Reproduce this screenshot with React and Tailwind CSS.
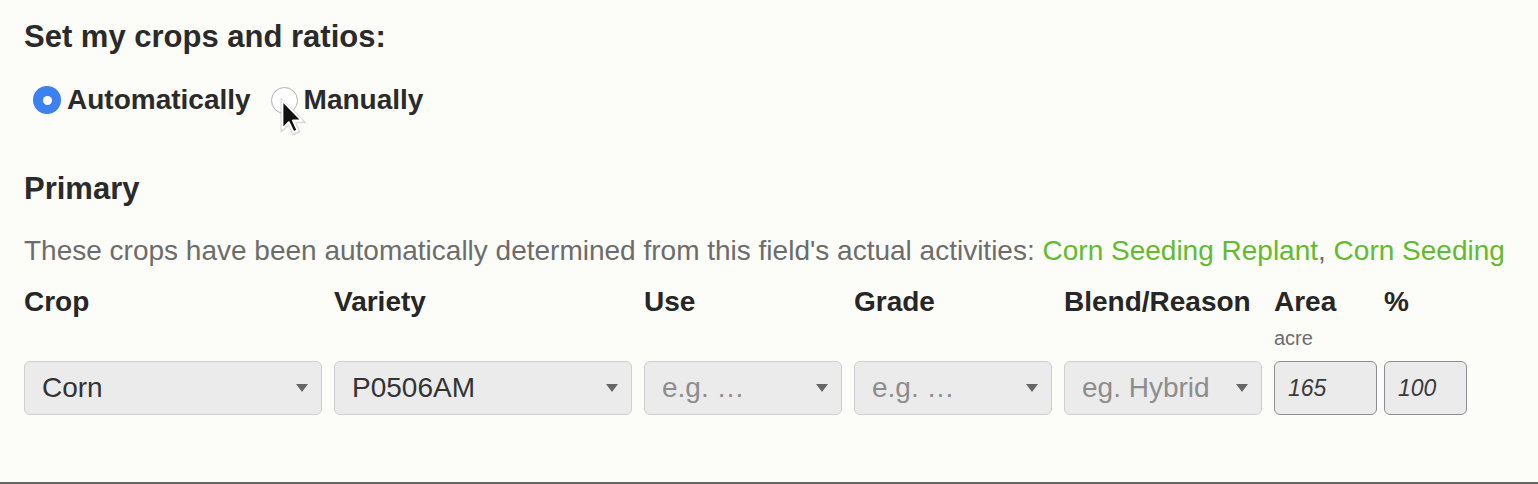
import { useState } from "react";

const columns = [
  { label: "Crop", width: "w-[298px]", type: "select", value: "Corn" },
  { label: "Variety", width: "w-[298px]", type: "select", value: "P0506AM" },
  { label: "Use", width: "w-[198px]", type: "select", placeholder: "e.g. …" },
  { label: "Grade", width: "w-[198px]", type: "select", placeholder: "e.g. …" },
  { label: "Blend/Reason", width: "w-[198px]", type: "select", placeholder: "eg. Hybrid" },
];

function Caret() {
  return (
    <svg width="12" height="8" viewBox="0 0 12 8" className="shrink-0">
      <polygon points="0,0 12,0 6,8" fill="#666666" />
    </svg>
  );
}

function SelectBox({ width, value, placeholder }) {
  return (
    <div
      className={`${width} h-[54px] flex items-center justify-between pl-[17px] pr-[13px] rounded-[6px] border border-[#cfcfd2] bg-[#ebebec]`}
    >
      {value ? (
        <span className="text-[28px] text-[#333333]">{value}</span>
      ) : (
        <span className="text-[28px] text-[#8d8d8d]">{placeholder}</span>
      )}
      <Caret />
    </div>
  );
}

function NumberBox({ width, value }) {
  return (
    <div
      className={`${width} h-[54px] flex items-center pl-[13px] rounded-[6px] border-[1.5px] border-[#8e8e92] bg-[#ebebec]`}
    >
      <span className="text-[23px] italic text-[#3a3a3a]">{value}</span>
    </div>
  );
}

function Radio({ checked, label, onClick }) {
  return (
    <button type="button" onClick={onClick} className="flex items-center gap-[6px] h-[28px]">
      {checked ? (
        <span className="w-[28px] h-[28px] rounded-full bg-[#3d80ef] flex items-center justify-center">
          <span className="w-[9px] h-[9px] rounded-full bg-white" />
        </span>
      ) : (
        <span className="w-[27px] h-[27px] rounded-full border-[1.5px] border-[#b0b0b0] bg-white" />
      )}
      <span className="text-[28px] font-bold text-[#2a2a2a] leading-[28px]">{label}</span>
    </button>
  );
}

export default function App() {
  const [mode, setMode] = useState("auto");

  return (
    <div
      className="relative h-[484px] flex flex-col bg-[#fcfcf8] overflow-hidden"
      style={{ fontFamily: '"Liberation Sans", Arial, sans-serif' }}
    >
      <div className="flex-1 px-[24px] pt-[21px]">
        <h2 className="text-[31px] font-bold leading-[31px] text-[#2a2a2a]">Set my crops and ratios:</h2>

        <div className="mt-[34px] ml-[9px] flex items-center gap-[20px]">
          <Radio checked={mode === "auto"} label="Automatically" onClick={() => setMode("auto")} />
          <Radio checked={mode === "manual"} label="Manually" onClick={() => setMode("manual")} />
        </div>

        <h3 className="mt-[59px] text-[31px] font-bold leading-[31px] text-[#2a2a2a]">Primary</h3>

        <p className="mt-[33px] text-[28px] leading-[28px] text-[#6c6c6c] whitespace-nowrap">
          These crops have been automatically determined from this field's actual activities:{" "}
          <span className="text-[#62bb2d]">Corn Seeding Replant</span>,{" "}
          <span className="text-[#62bb2d]">Corn Seeding</span>
        </p>

        <div className="mt-[23px] flex items-start">
          <div className="flex gap-[12px]">
            {columns.map((c) => (
              <div key={c.label} className={`${c.width} flex flex-col`}>
                <div className="text-[28px] font-bold leading-[28px] text-[#262626]">{c.label}</div>
                <div className="h-[45px]" />
                <SelectBox width={c.width} value={c.value} placeholder={c.placeholder} />
              </div>
            ))}
          </div>
          <div className="ml-[12px] w-[103px] flex flex-col">
            <div className="text-[28px] font-bold leading-[28px] text-[#262626]">Area</div>
            <div className="mt-[12px] h-[21px] text-[20px] leading-[21px] text-[#6c6c6c]">acre</div>
            <div className="h-[12px]" />
            <NumberBox width="w-[103px]" value="165" />
          </div>
          <div className="ml-[7px] w-[83px] flex flex-col">
            <div className="text-[28px] font-bold leading-[28px] text-[#262626]">%</div>
            <div className="h-[45px]" />
            <NumberBox width="w-[83px]" value="100" />
          </div>
        </div>
      </div>
      <div className="h-[2px] bg-[#666666]" />

      {/* mouse pointer over the Manually radio */}
      <svg
        className="absolute left-[279px] top-[97px] pointer-events-none"
        width="30"
        height="40"
        viewBox="0 0 26 34"
      >
        <path
          d="M1.8 1 L1.8 30 L8.3 24 L12 32.5 L18 30 L14.5 22 L23 22 Z"
          fill="#e4e4e4"
          stroke="#cfcfcf"
          strokeWidth="1"
          strokeLinejoin="round"
          opacity="0.8"
        />
        <path
          d="M3 3 L3 27 L8.5 21.5 L12.5 30 L16 28.5 L12 20 L19.5 20 Z"
          fill="#111111"
          stroke="#ffffff"
          strokeWidth="1.6"
          strokeLinejoin="round"
        />
      </svg>
    </div>
  );
}
